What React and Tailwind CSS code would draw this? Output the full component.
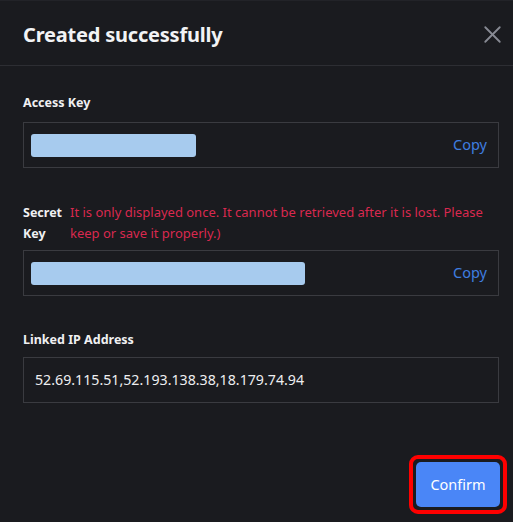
import { X } from "lucide-react";

const font = { fontFamily: '"Noto Sans", "Open Sans", sans-serif' };

function KeyField({ barWidth }) {
  return (
    <div className="flex h-[46px] items-center justify-between border border-[#3a3b40] pl-[7px] pr-[11px]">
      <div className={`h-[23px] rounded-[3px] bg-[#a7cbee] ${barWidth}`} />
      <button className="text-[14.5px] text-[#3f7ee0]">Copy</button>
    </div>
  );
}

export default function App() {
  return (
    <div
      className="relative h-[522px] w-[513px] overflow-hidden bg-[#1a1b1f] text-white"
      style={font}
    >
      <div className="h-px bg-[#222328]" />
      <header className="flex h-[65px] items-center justify-between border-b border-[#2d2e33] pt-[3px] pl-[23px] pr-[6px]">
        <h2 className="text-[20px] font-bold tracking-[-0.2px] text-[#f2f3f5]">
          Created successfully
        </h2>
        <X className="h-[29px] w-[29px] text-[#878a93]" strokeWidth={1.5} />
      </header>

      <div className="pl-[23px] pr-[14px]">
        <div className="pt-[27px]">
          <div className="mb-[9px] text-[12.5px] font-bold leading-[20px] text-[#f0f0f2]">
            Access Key
          </div>
          <KeyField barWidth="w-[165px]" />
        </div>

        <div className="pt-[34px]">
          <div className="mb-[6px] flex text-[12.5px] leading-[21px]">
            <div className="w-[47px] shrink-0 font-bold text-[#f0f0f2]">
              Secret
              <br />
              Key
            </div>
            <div className="text-[13px] text-[#d9294f]">
              It is only displayed once. It cannot be retrieved after it is
              lost. Please keep or save it properly.)
            </div>
          </div>
          <KeyField barWidth="w-[274px]" />
        </div>

        <div className="pt-[34px]">
          <div className="mb-[7px] text-[12.5px] font-bold leading-[20px] text-[#f0f0f2]">
            Linked IP Address
          </div>
          <div className="flex h-[46px] items-center border border-[#3a3b40] px-[11px] text-[14.2px] text-[#eeeef0]">
            52.69.115.51,52.193.138.38,18.179.74.94
          </div>
        </div>

        <div className="-mr-[8px] flex justify-end pt-[52px]">
          <div className="rounded-[9px] border-[4px] border-[#ff0000] p-[3px]">
            <button className="h-[45px] w-[84px] rounded-[5px] bg-[#4a86f7] text-[14.5px] text-white">
              Confirm
            </button>
          </div>
        </div>
      </div>
    </div>
  );
}
